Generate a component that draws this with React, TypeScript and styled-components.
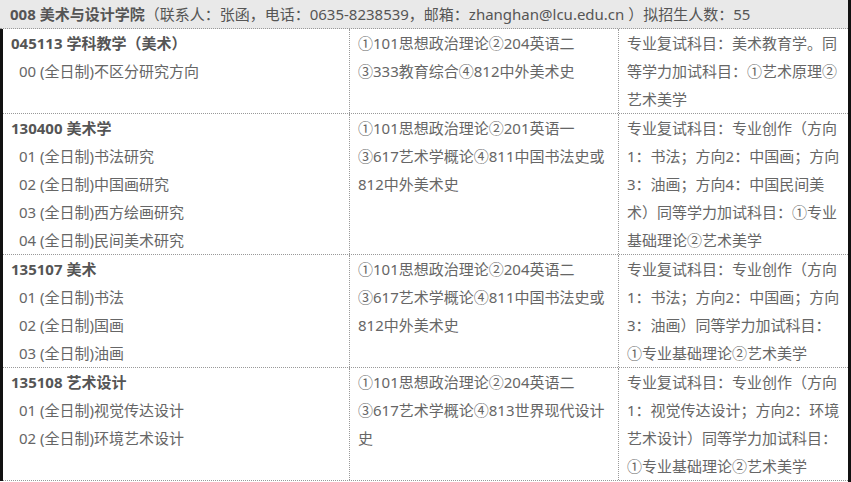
import React from 'react';
import styled, { createGlobalStyle } from 'styled-components';

const GlobalStyle = createGlobalStyle`
	body {
		margin: 0;
		background: #fff;
		font-family: "Noto Sans", "Noto Sans CJK SC", sans-serif;
	}
`;

const Page = styled.div`
	width: 851px;
	height: 482px;
	overflow: hidden;
	box-sizing: border-box;
	border-right: 3px solid #111;
	font-size: 15px;
	color: #666;
`;

const Header = styled.div`
	height: 28px;
	line-height: 28px;
	padding-left: 10px;
	background: #e9e9e9;
	color: #555;
	white-space: nowrap;
	border-bottom: 1px dotted #999;
`;

const Strong = styled.b`
	font-weight: 700;
	color: #555;
`;

const Body = styled.div`
	border-left: 3px solid #111;
`;

const Row = styled.div`
	display: grid;
	grid-template-columns: 347px 269px 1fr;
	border-bottom: 1px dotted #999;
`;

const Cell = styled.div<{ $last?: boolean }>`
	padding: 0 0 0 8px;
	border-right: ${(p) => (p.$last ? 'none' : '1px dotted #999')};
`;

const Line = styled.div<{ $indent?: boolean; $bold?: boolean }>`
	height: 28px;
	line-height: 28px;
	white-space: nowrap;
	padding-left: ${(p) => (p.$indent ? '8px' : '0')};
	font-weight: ${(p) => (p.$bold ? 700 : 400)};
	color: ${(p) => (p.$bold ? '#555' : '#666')};
`;

type Major = {
	code: string;
	subs: string[];
	exam: string[];
	note: string[];
};

const majors: Major[] = [
	{
		code: '045113 学科教学（美术）',
		subs: ['00 (全日制)不区分研究方向'],
		exam: ['①101思想政治理论②204英语二', '③333教育综合④812中外美术史'],
		note: ['专业复试科目：美术教育学。同', '等学力加试科目：①艺术原理②', '艺术美学'],
	},
	{
		code: '130400 美术学',
		subs: ['01 (全日制)书法研究', '02 (全日制)中国画研究', '03 (全日制)西方绘画研究', '04 (全日制)民间美术研究'],
		exam: ['①101思想政治理论②201英语一', '③617艺术学概论④811中国书法史或', '812中外美术史'],
		note: [
			'专业复试科目：专业创作（方向',
			'1：书法；方向2：中国画；方向',
			'3：油画；方向4：中国民间美',
			'术）同等学力加试科目：①专业',
			'基础理论②艺术美学',
		],
	},
	{
		code: '135107 美术',
		subs: ['01 (全日制)书法', '02 (全日制)国画', '03 (全日制)油画'],
		exam: ['①101思想政治理论②204英语二', '③617艺术学概论④811中国书法史或', '812中外美术史'],
		note: ['专业复试科目：专业创作（方向', '1：书法；方向2：中国画；方向', '3：油画）同等学力加试科目：', '①专业基础理论②艺术美学'],
	},
	{
		code: '135108 艺术设计',
		subs: ['01 (全日制)视觉传达设计', '02 (全日制)环境艺术设计'],
		exam: ['①101思想政治理论②204英语二', '③617艺术学概论④813世界现代设计', '史'],
		note: ['专业复试科目：专业创作（方向', '1：视觉传达设计；方向2：环境', '艺术设计）同等学力加试科目：', '①专业基础理论②艺术美学'],
	},
];

const App = () => {
	return (
		<Page>
			<GlobalStyle />
			<Header>
				<Strong>008 美术与设计学院</Strong>（联系人：张函，电话：0635-8238539，邮箱：zhanghan@lcu.edu.cn ）拟招生人数：55
			</Header>
			<Body>
				{majors.map((m) => (
					<Row key={m.code}>
						<Cell>
							<Line $bold>{m.code}</Line>
							{m.subs.map((s) => (
								<Line $indent key={s}>
									{s}
								</Line>
							))}
						</Cell>
						<Cell>
							{m.exam.map((e) => (
								<Line key={e}>{e}</Line>
							))}
						</Cell>
						<Cell $last>
							{m.note.map((n) => (
								<Line key={n}>{n}</Line>
							))}
						</Cell>
					</Row>
				))}
			</Body>
		</Page>
	);
};

export default App;
